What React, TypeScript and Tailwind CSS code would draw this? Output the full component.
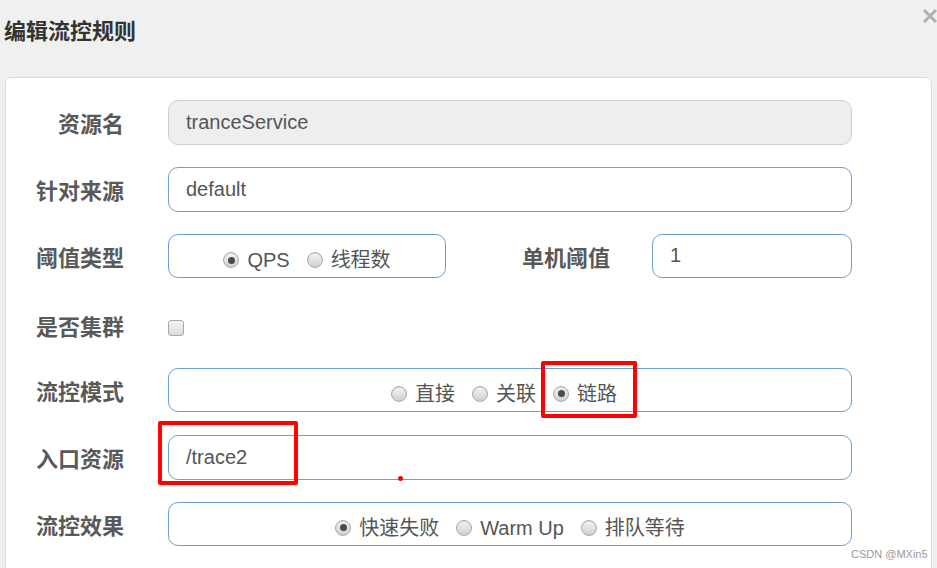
import React from "react";

const cjk = "font-['Liberation_Sans','Noto_Sans_CJK_SC',sans-serif]";

function Radio({ checked, label }: { checked?: boolean; label: string }) {
  return (
    <span className="flex items-center">
      <span className="w-[16px] h-[16px] rounded-full border border-[#aaaaaa] bg-gradient-to-b from-[#f6f6f6] to-[#cfcfcf] flex items-center justify-center shadow-[inset_0_1px_1px_rgba(0,0,0,0.1)]">
        {checked && <span className="w-[7px] h-[7px] rounded-full bg-[#4a4a4a]" />}
      </span>
      <span className="ml-[8px] text-[20px] text-[#555] leading-none">{label}</span>
    </span>
  );
}

function Label({ children, className = "w-[118px] pt-[6px]" }: { children: React.ReactNode; className?: string }) {
  return (
    <div className={`${className} text-right text-[22px] font-bold text-[#595959] leading-none shrink-0`}>{children}</div>
  );
}

export default function App() {
  return (
    <div className={`relative w-[937px] h-[568px] overflow-hidden bg-[#f0f0f0] ${cjk}`}>
      <div className="h-[77px] pl-[4px] pt-[20px]">
        <div className="text-[22px] leading-[24px] font-bold text-[#333]">编辑流控规则</div>
      </div>
      <svg className="absolute left-[922px] top-[8px]" width="16" height="16" viewBox="0 0 16 16">
        <path d="M2 2 L14 14 M14 2 L2 14" stroke="#b0b0b0" strokeWidth="3" />
      </svg>

      <div className="ml-[5px] w-[927px] h-[520px] rounded-[6px] border border-[#dcdcdc] bg-white pt-[22px]">
        <div className="flex flex-col gap-[23px]">
          <div className="flex items-center h-[44px]">
            <Label>资源名</Label>
            <div className="ml-[44px] w-[684px] h-[45px] rounded-[10px] border border-[#cfcfcf] bg-[#eeeeee] flex items-center pl-[17px] text-[20px] text-[#555]">
              tranceService
            </div>
          </div>
          <div className="flex items-center h-[44px]">
            <Label>针对来源</Label>
            <div className="ml-[44px] w-[684px] h-[45px] rounded-[10px] border border-[#6b9fd3] bg-white flex items-center pl-[17px] text-[20px] text-[#555]">
              default
            </div>
          </div>
          <div className="flex items-center h-[44px]">
            <Label>阈值类型</Label>
            <div className="ml-[44px] w-[278px] h-[44px] rounded-[10px] border border-[#6b9fd3] bg-white flex items-center justify-center gap-[17px] pt-[8px]">
              <Radio checked label="QPS" />
              <Radio label="线程数" />
            </div>
            <Label className="w-[164px] pt-[6px]">单机阈值</Label>
            <div className="ml-[42px] w-[200px] h-[44px] rounded-[10px] border border-[#6b9fd3] bg-white flex items-center pl-[17px] pb-[2px] text-[20px] text-[#555]">
              1
            </div>
          </div>
          <div className="flex items-center h-[44px] pt-[9px]">
            <Label className="w-[118px] pt-[1px]">是否集群</Label>
            <div className="ml-[44px] w-[16px] h-[16px] rounded-[3px] border border-[#a8a8a8] bg-gradient-to-b from-[#f4f4f4] to-[#dedede]" />
          </div>
          <div className="flex items-center h-[44px]">
            <Label>流控模式</Label>
            <div className="ml-[44px] w-[684px] h-[44px] rounded-[10px] border border-[#6b9fd3] bg-white flex items-center justify-center gap-[17px] pt-[7px] pr-[12px]">
              <Radio label="直接" />
              <Radio label="关联" />
              <Radio checked label="链路" />
            </div>
          </div>
          <div className="flex items-center h-[44px]">
            <Label>入口资源</Label>
            <div className="ml-[44px] w-[684px] h-[45px] rounded-[10px] border border-[#6b9fd3] bg-white flex items-center pl-[17px] text-[20px] text-[#555]">
              /trace2
            </div>
          </div>
          <div className="flex items-center h-[44px]">
            <Label>流控效果</Label>
            <div className="ml-[44px] w-[684px] h-[44px] rounded-[10px] border border-[#6b9fd3] bg-white flex items-center justify-center gap-[17px] pt-[7px]">
              <Radio checked label="快速失败" />
              <Radio label="Warm Up" />
              <Radio label="排队等待" />
            </div>
          </div>
        </div>
      </div>

      <div className="absolute left-[541px] top-[361px] w-[96px] h-[57px] border-[4px] border-[#ff0000] rounded-[2px]" />
      <div className="absolute left-[158px] top-[421px] w-[140px] h-[64px] border-[4px] border-[#ff0000] rounded-[2px]" />
      <div className="absolute left-[398px] top-[476px] w-[5px] h-[5px] rounded-full bg-[#ff0000]" />
      <div className="absolute left-[851px] top-[547px] text-[11px] leading-[14px] text-[#9a9a9a] font-['Liberation_Sans',sans-serif]">
        CSDN @MXin5
      </div>
    </div>
  );
}
